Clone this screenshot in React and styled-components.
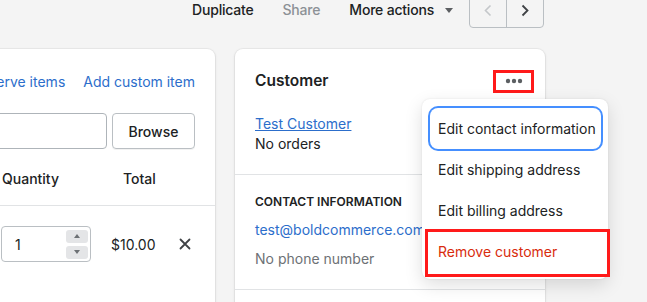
import React from 'react';
import styled, { createGlobalStyle } from 'styled-components';

const GlobalStyle = createGlobalStyle`
    html, body {
        margin: 0;
        padding: 0;
        background: #f4f4f4;
        overflow: hidden;
    }
    body {
        font-family: Inter, "Noto Sans", sans-serif;
        font-size: 14px;
        color: #202223;
    }
`;

const App = () => {
    return (
        <Page>
            <GlobalStyle />
            <TopBar>
                <Action>Duplicate</Action>
                <Action disabled>Share</Action>
                <Action>
                    More actions
                    <Caret viewBox="0 0 8 5"><path d="M0 0h8L4 5z" fill="#5c5f62" /></Caret>
                </Action>
                <Pager>
                    <PagerButton disabled>
                        <svg width="8" height="13" viewBox="0 0 8 13"><path d="M6.5 1.5 1.5 6.5l5 5" fill="none" stroke="#c4c7ca" strokeWidth="1.6" /></svg>
                    </PagerButton>
                    <PagerButton>
                        <svg width="8" height="13" viewBox="0 0 8 13"><path d="M1.5 1.5l5 5-5 5" fill="none" stroke="#3f4245" strokeWidth="1.8" /></svg>
                    </PagerButton>
                </Pager>
            </TopBar>

            <Columns>
                <ProductsCard>
                    <LinkRow>
                        <TextLink>Reserve items</TextLink>
                        <TextLink>Add custom item</TextLink>
                    </LinkRow>
                    <SearchRow>
                        <SearchInput />
                        <Button>Browse</Button>
                    </SearchRow>
                    <TableHead>
                        <Cell width={67} />
                        <Cell width={121}>Quantity</Cell>
                        <Cell>Total</Cell>
                    </TableHead>
                    <TableRow>
                        <Cell width={66} />
                        <QtyInput>
                            <span>1</span>
                            <Spinner>
                                <SpinButton>
                                    <svg width="6" height="4" viewBox="0 0 6 4"><path d="M0 4h6L3 0z" fill="#6d7175" /></svg>
                                </SpinButton>
                                <SpinButton>
                                    <svg width="6" height="4" viewBox="0 0 6 4"><path d="M0 0h6L3 4z" fill="#6d7175" /></svg>
                                </SpinButton>
                            </Spinner>
                        </QtyInput>
                        <Price>$10.00</Price>
                        <RemoveButton>
                            <svg width="12" height="12" viewBox="0 0 12 12"><path d="M1.5 1.5l9 9M10.5 1.5l-9 9" stroke="#3f4245" strokeWidth="1.8" strokeLinecap="round" /></svg>
                        </RemoveButton>
                    </TableRow>
                </ProductsCard>

                <CustomerCard>
                    <Section>
                        <CardHeader>
                            <Heading>Customer</Heading>
                            <DotsButton>
                                <svg width="18" height="6" viewBox="0 0 18 6">
                                    <circle cx="3" cy="3" r="2.2" fill="#5c5f62" />
                                    <circle cx="9" cy="3" r="2.2" fill="#5c5f62" />
                                    <circle cx="15" cy="3" r="2.2" fill="#5c5f62" />
                                </svg>
                            </DotsButton>
                        </CardHeader>
                        <CustomerInfo>
                            <CustomerLink>Test Customer</CustomerLink>
                            <Line>No orders</Line>
                        </CustomerInfo>
                    </Section>
                    <Section top={19}>
                        <Subheading>Contact information</Subheading>
                        <Line blue gap={10}>test@boldcommerce.com</Line>
                        <Line muted gap={9}>No phone number</Line>
                    </Section>
                    <Section top={19} />

                    <Menu>
                        <MenuItem focused>Edit contact information</MenuItem>
                        <MenuItem>Edit shipping address</MenuItem>
                        <MenuItem>Edit billing address</MenuItem>
                        <MenuItem destructive>Remove customer</MenuItem>
                    </Menu>
                </CustomerCard>
            </Columns>
        </Page>
    );
};

const Page = styled.div`
    width: 647px;
    height: 302px;
    overflow: hidden;
`;

const TopBar = styled.div`
    display: flex;
    justify-content: flex-end;
    align-items: center;
    height: 36px;
    margin-top: -8px;
    padding-right: 103px;
`;

const Action = styled.div`
    display: flex;
    align-items: center;
    margin-left: 29px;
    font-weight: 500;
    letter-spacing: -0.2px;
    line-height: 20px;
    color: ${props => props.disabled ? '#8c9196' : '#202223'};
`;

const Caret = styled.svg`
    width: 8px;
    height: 5px;
    margin-left: 11px;
`;

const Pager = styled.div`
    display: flex;
    margin-left: 16px;
    height: 36px;
    border: 1px solid #babfc3;
    border-radius: 0 0 4px 4px;
    box-sizing: border-box;
`;

const PagerButton = styled.div`
    width: 36px;
    display: flex;
    align-items: center;
    justify-content: center;
    & + & {
        border-left: 1px solid #babfc3;
    }
`;

const Columns = styled.div`
    display: flex;
    gap: 20px;
    margin-top: 21px;
    margin-left: -85px;
`;

const Card = styled.div`
    position: relative;
    background: #fff;
    border-radius: 8px;
    box-shadow: 0 0 0 1px rgba(63, 63, 68, 0.05), 0 1px 3px 0 rgba(63, 63, 68, 0.15);
    height: 300px;
`;

const ProductsCard = styled(Card)`
    width: 300px;
    flex-shrink: 0;
`;

const LinkRow = styled.div`
    display: flex;
    justify-content: flex-end;
    gap: 18px;
    padding: 23px 20px 0;
    line-height: 20px;
`;

const TextLink = styled.span`
    color: #2c6ecb;
    white-space: nowrap;
`;

const SearchRow = styled.div`
    display: flex;
    gap: 5px;
    margin-top: 21px;
    padding: 0 20px;
`;

const SearchInput = styled.div`
    flex: 1;
    height: 36px;
    box-sizing: border-box;
    border: 1px solid #aeb4b9;
    border-radius: 4px;
`;

const Button = styled.div`
    width: 83px;
    height: 36px;
    box-sizing: border-box;
    display: flex;
    align-items: center;
    justify-content: center;
    border: 1px solid #babfc3;
    border-radius: 4px;
    font-weight: 500;
    box-shadow: 0 1px 0 rgba(0, 0, 0, 0.05);
`;

const TableHead = styled.div`
    display: flex;
    padding: 20px 20px 16px;
    line-height: 20px;
    font-weight: 500;
    border-bottom: 1px solid #e1e3e5;
`;

const Cell = styled.div`
    width: ${props => props.width ? props.width + 'px' : 'auto'};
    flex-shrink: 0;
`;

const TableRow = styled.div`
    display: flex;
    align-items: center;
    padding: 20px 20px;
`;

const QtyInput = styled.div`
    width: 90px;
    height: 36px;
    box-sizing: border-box;
    display: flex;
    align-items: center;
    justify-content: space-between;
    padding: 0 2px 0 13px;
    border: 1px solid #babfc3;
    border-radius: 4px;
    & > span {
        color: #202223;
    }
`;

const Spinner = styled.div`
    display: flex;
    flex-direction: column;
    gap: 3px;
`;

const SpinButton = styled.div`
    width: 22px;
    height: 13px;
    border-radius: 3px;
    background: #e4e5e7;
    display: flex;
    align-items: center;
    justify-content: center;
`;

const Price = styled.div`
    margin-left: 20px;
    width: 53px;
`;

const RemoveButton = styled.div`
    margin-left: 15px;
    display: flex;
`;

const CustomerCard = styled(Card)`
    width: 310px;
    flex-shrink: 0;
`;

const Section = styled.div`
    padding: ${props => props.top || 22}px 20px 20px;
    border-bottom: 1px solid #e1e3e5;
    &:last-of-type {
        border-bottom: none;
    }
`;

const CardHeader = styled.div`
    display: flex;
    justify-content: space-between;
    align-items: center;
    height: 20px;
`;

const Heading = styled.div`
    font-size: 15.5px;
    font-weight: 600;
    line-height: 20px;
`;

const DotsButton = styled.div`
    width: 41px;
    height: 23px;
    box-sizing: border-box;
    border: 3px solid #ff1a1a;
    margin-right: -9px;
    display: flex;
    align-items: center;
    justify-content: center;
`;

const CustomerInfo = styled.div`
    margin-top: 23px;
    line-height: 20px;
`;

const CustomerLink = styled.div`
    color: #2c6ecb;
    text-decoration: underline;
`;

const Line = styled.div`
    margin-top: ${props => props.gap || 0}px;
    line-height: 20px;
    color: ${props => props.blue ? '#2c6ecb' : props.muted ? '#6d7175' : '#202223'};
`;

const Subheading = styled.div`
    font-size: 12px;
    font-weight: 600;
    line-height: 16px;
    text-transform: uppercase;
`;

const Menu = styled.div`
    position: absolute;
    left: 187px;
    top: 50px;
    width: 186px;
    box-sizing: border-box;
    padding: 9px 7px 7px 8px;
    background: #fff;
    border-radius: 8px;
    box-shadow: 0 0 2px rgba(0, 0, 0, 0.1), 0 6px 18px rgba(0, 0, 0, 0.13);
    z-index: 2;
`;

const MenuItem = styled.div`
    position: relative;
    height: 41px;
    display: flex;
    align-items: center;
    padding: 0 8px;
    border-radius: 8px;
    white-space: nowrap;
    color: ${props => props.destructive ? '#d82c0d' : '#202223'};
    box-shadow: ${props => props.focused ? '0 0 0 2px #458fff' : 'none'};
    ${props => props.destructive && `
        &::after {
            content: '';
            position: absolute;
            left: -5px;
            right: -9px;
            top: -2px;
            bottom: -5px;
            border: 3px solid #ff1a1a;
        }
    `}
`;

export default App;
